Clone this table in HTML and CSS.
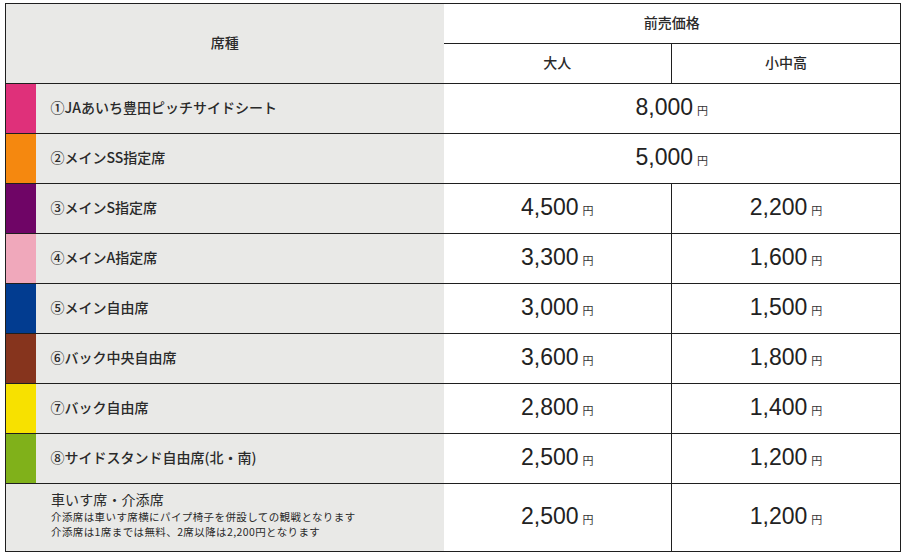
FILE: index.html
```html
<!DOCTYPE html>
<html lang="ja">
<head>
<meta charset="utf-8">
<link rel="stylesheet" href="styles.css">
</head>
<body>
<table class="price-table">
  <colgroup>
    <col class="c-color">
    <col class="c-name">
    <col class="c-adult">
    <col class="c-child">
  </colgroup>
  <thead>
    <tr class="h1">
      <th class="seat-head" colspan="2" rowspan="2">席種</th>
      <th class="price-head" colspan="2">前売価格</th>
    </tr>
    <tr class="h2">
      <th class="sub-head">大人</th>
      <th class="sub-head sep">小中高</th>
    </tr>
  </thead>
  <tbody>
    <tr class="row">
      <td class="swatch pink"></td>
      <td class="name">①JAあいち豊田ピッチサイドシート</td>
      <td class="price" colspan="2"><span class="num">8,000</span><span class="yen">円</span></td>
    </tr>
    <tr class="row">
      <td class="swatch orange"></td>
      <td class="name">②メインSS指定席</td>
      <td class="price" colspan="2"><span class="num">5,000</span><span class="yen">円</span></td>
    </tr>
    <tr class="row">
      <td class="swatch purple"></td>
      <td class="name">③メインS指定席</td>
      <td class="price"><span class="num">4,500</span><span class="yen">円</span></td>
      <td class="price sep"><span class="num">2,200</span><span class="yen">円</span></td>
    </tr>
    <tr class="row">
      <td class="swatch lpink"></td>
      <td class="name">④メインA指定席</td>
      <td class="price"><span class="num">3,300</span><span class="yen">円</span></td>
      <td class="price sep"><span class="num">1,600</span><span class="yen">円</span></td>
    </tr>
    <tr class="row">
      <td class="swatch blue"></td>
      <td class="name">⑤メイン自由席</td>
      <td class="price"><span class="num">3,000</span><span class="yen">円</span></td>
      <td class="price sep"><span class="num">1,500</span><span class="yen">円</span></td>
    </tr>
    <tr class="row">
      <td class="swatch brown"></td>
      <td class="name">⑥バック中央自由席</td>
      <td class="price"><span class="num">3,600</span><span class="yen">円</span></td>
      <td class="price sep"><span class="num">1,800</span><span class="yen">円</span></td>
    </tr>
    <tr class="row">
      <td class="swatch yellow"></td>
      <td class="name">⑦バック自由席</td>
      <td class="price"><span class="num">2,800</span><span class="yen">円</span></td>
      <td class="price sep"><span class="num">1,400</span><span class="yen">円</span></td>
    </tr>
    <tr class="row">
      <td class="swatch green"></td>
      <td class="name">⑧サイドスタンド自由席(北・南)</td>
      <td class="price"><span class="num">2,500</span><span class="yen">円</span></td>
      <td class="price sep"><span class="num">1,200</span><span class="yen">円</span></td>
    </tr>
    <tr class="row last">
      <td class="name wheel" colspan="2">
        <div class="wheel-title">車いす席・介添席</div>
        <div class="wheel-note">介添席は車いす席横にパイプ椅子を併設しての観戦となります</div>
        <div class="wheel-note">介添席は1席までは無料、2席以降は2,200円となります</div>
      </td>
      <td class="price"><span class="num">2,500</span><span class="yen">円</span></td>
      <td class="price sep"><span class="num">1,200</span><span class="yen">円</span></td>
    </tr>
  </tbody>
</table>
</body>
</html>
```

FILE: styles.css
```css
html, body {
  margin: 0;
  padding: 0;
  background: #ffffff;
}

body {
  font-family: "Noto Sans CJK JP", "Noto Sans", sans-serif;
  color: #2a2a2a;
}

.price-table {
  margin: 3px 0 0 5px;
  width: 895px;
  border-collapse: collapse;
  table-layout: fixed;
  border: 1px solid #1f1f1f;
}

.c-color { width: 30px; }
.c-name { width: 408px; }
.c-adult { width: 228px; }
.c-child { width: 229px; }

th, td {
  padding: 0;
  border-bottom: 1px solid #1f1f1f;
}

th {
  font-weight: 500;
  font-size: 14px;
  text-align: center;
  padding-bottom: 4px;
}

.seat-head {
  background: #e9e9e7;
  padding-bottom: 4px;
}

.h1 { height: 40px; }
.h2 { height: 40px; }

.sub-head {
  background: #ffffff;
}

.sep {
  border-left: 1px solid #1f1f1f;
}

.row { height: 50px; }
.row.last { height: 68px; }

.swatch { padding: 0; }
.pink { background: #df307a; }
.orange { background: #f5880f; }
.purple { background: #6f0566; }
.lpink { background: #f0a8bb; }
.blue { background: #023c90; }
.brown { background: #86341d; }
.yellow { background: #f7e100; }
.green { background: #80b11a; }

.name {
  background: #e9e9e7;
  padding-left: 15px;
  padding-bottom: 3px;
  font-size: 14px;
  font-weight: 500;
  color: #2a2a2a;
  white-space: nowrap;
}

.wheel {
  padding-left: 45px;
  padding-bottom: 7px;
  vertical-align: middle;
}

.wheel-title {
  font-size: 14px;
  font-weight: 400;
  line-height: 18px;
  letter-spacing: 0.1px;
  margin-bottom: 1px;
}

.wheel-note {
  font-size: 10.5px;
  line-height: 15px;
  font-weight: 400;
  letter-spacing: 0.4px;
}

.price {
  text-align: center;
  background: #ffffff;
  padding-bottom: 2px;
}

.num {
  font-family: "Liberation Sans", Arial, sans-serif;
  font-size: 23px;
  color: #222222;
}

.yen {
  font-family: "Noto Sans CJK JP", sans-serif;
  font-size: 11px;
  margin-left: 4px;
  color: #333333;
}
```
